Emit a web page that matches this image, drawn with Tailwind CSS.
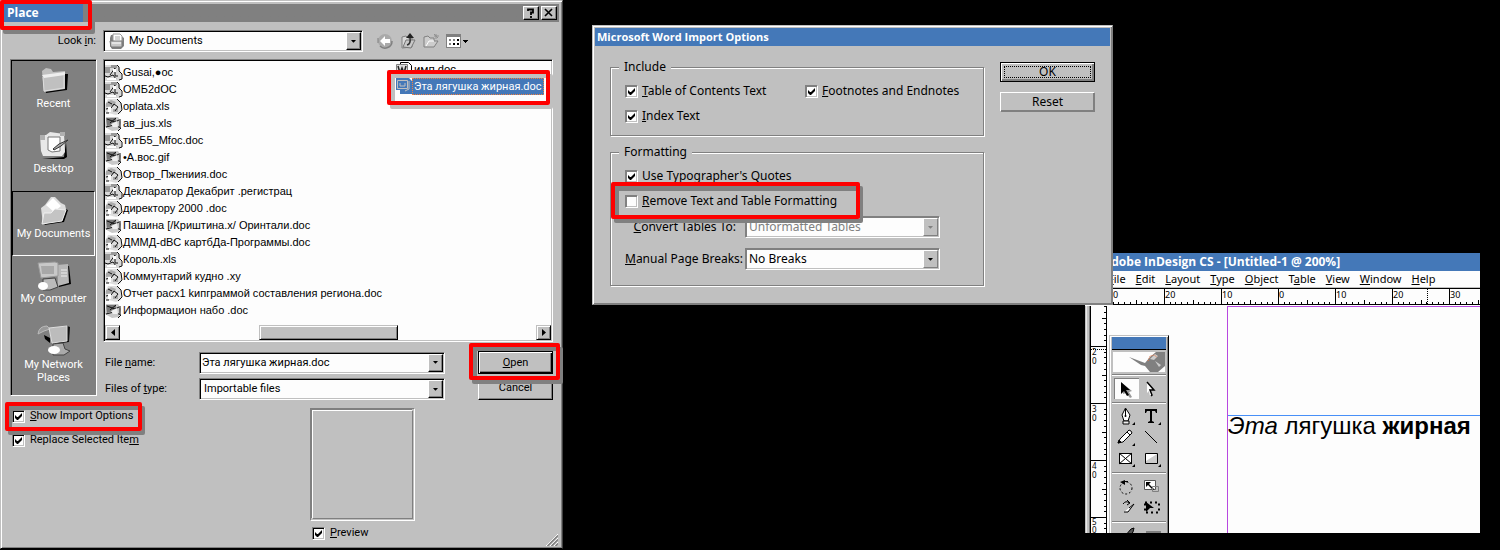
<!DOCTYPE html>
<html lang="en">
<head>
<meta charset="utf-8">
<meta name="viewport" content="width=device-width, initial-scale=1">
<title>Place</title>
<script src="https://cdn.jsdelivr.net/npm/@tailwindcss/browser@4"></script>
</head>
<body class="bg-black">
<svg class="hidden" aria-hidden="true">
  <symbol id="tick" viewBox="0 0 9 9"><path d="M1 3v3l2 2h1l4-4V1L4 5H3L1 3z" fill="#000"/></symbol>
  <symbol id="down" viewBox="0 0 7 4"><path d="M0 0h7L4 3.500H3z"/></symbol>
  <symbol id="fa" viewBox="0 0 18 17"><path d="M0 1h12l3 4 2 10-3 2H0z" fill="#d8d8d8"/><path d="M0 3h6V1h6v3H5v5H0z" fill="#999"/><path d="M12 1l2 2v4l3 3v5l-3 1M5 11l5-7v8h3M0 12l3 1 5-2 3 4" fill="none" stroke="#111"/><path d="M2 14h9v2H2zM8 5h3v3H8z" fill="#fff"/></symbol>
  <symbol id="fb" viewBox="0 0 18 17"><path d="M3 1h9l5 5-1 9-5 2-11-3V7z" fill="#ddd"/><path d="M1 5l5-3 5 2-2 4-8 1zM8 11h5v3H8z" fill="#aaa"/><path d="M12 1l4 4 1 7-4 4M1 11l5-1 3-4 4 3-3 4M1 15h3M3 4l4 2" fill="none" stroke="#111"/><path d="M3 9h3v5H3z" fill="#fff"/></symbol>
  <symbol id="fc" viewBox="0 0 18 17"><path d="M1 2h12l3 5-2 8-7 1-7-4z" fill="#c8c8c8"/><path d="M1 3h10v5L2 11z" fill="#777"/><path d="M2 4l8 3 4-2M1 12l8-2 7 3-3 3M15 4v8M5 8l6-5" fill="none" stroke="#111"/><path d="M6 9l6-3 1 6H8z" fill="#eee"/></symbol>
</svg>

<main class="relative min-h-screen overflow-hidden font-['Roboto','Liberation_Sans',sans-serif] text-[11px] leading-4 text-black">

  <!-- Adobe InDesign document window -->
  <section class="absolute left-[1085px] top-[253px] flex h-[280px] w-[395px] flex-col overflow-hidden bg-[#fdfdfd] font-['Noto_Sans',sans-serif] text-[11px]">
    <h2 class="h-[18px] bg-[#4478b8] pl-[18px] font-['Open_Sans',sans-serif] text-[12px] leading-[18px] font-bold whitespace-nowrap text-white">Adobe InDesign CS - [Untitled-1 @ 200%]</h2>
    <nav class="flex h-[17px] gap-[10px] border-b border-[#c0c0c0] pl-[23px] leading-4">
      <a href="#"><u>F</u>ile</a><a href="#"><u>E</u>dit</a><a href="#"><u>L</u>ayout</a><a href="#"><u>T</u>ype</a><a href="#"><u>O</u>bject</a><a href="#">T<u>a</u>ble</a><a href="#"><u>V</u>iew</a><a href="#"><u>W</u>indow</a><a href="#"><u>H</u>elp</a>
    </nav>
    <svg class="h-[18px] w-full shrink-0" viewBox="0 0 395 18" shape-rendering="crispEdges" font-size="9" font-family="Noto Sans">
      <path d="M0 .5h395M0 16.500h395" stroke="#000"/>
      <g id="hticks" stroke="#000"></g>
      <path d="M342.500 1v15" stroke="#000" stroke-dasharray="1 1"/>
      <text x="28" y="10">0</text><text x="80" y="10">20</text><text x="137" y="10">10</text><text x="194" y="10">0</text><text x="251" y="10">10</text><text x="308" y="10">20</text><text x="365" y="10">30</text>
    </svg>
    <div class="flex min-h-0 flex-1">
      <svg class="w-[23px] shrink-0" viewBox="0 0 23 227" preserveAspectRatio="xMinYMin" shape-rendering="crispEdges" font-size="8" font-family="Noto Sans">
        <path d="M0 0h5v227H0z" fill="#c0c0c0"/><path d="M1.500 0v227" stroke="#e8e8e8"/><path d="M4.500 0v227" stroke="#808080"/>
        <path d="M5.500 0v227M21.500 0v227" stroke="#000"/>
        <g id="vticks" stroke="#000"></g>
        <path d="M6 43.500h15" stroke="#000" stroke-dasharray="1 1"/>
        <text x="7" y="49">2</text><text x="7" y="58">0</text><text x="7" y="106">3</text><text x="7" y="115">0</text><text x="7" y="163">4</text><text x="7" y="172">0</text><text x="7" y="219">5</text><text x="7" y="227">0</text>
      </svg>
      <div class="relative flex-1 pl-[119px]">
        <div class="h-full border-t border-l border-[#b848e0] pt-[108px]">
          <p class="border-t border-[#4890f8] font-['Liberation_Sans',Arial,sans-serif] text-[24px] leading-[20px] whitespace-nowrap"><i>Эта</i> лягушка <b>жирная</b></p>
        </div>
        <!-- floating tool palette -->
        <aside class="absolute top-[29px] left-[1px] flex h-[210px] w-[60px] flex-col border border-[#c0c0c0] border-r-black bg-[#c0c0c0] px-[2px] pt-[1px] shadow-[inset_1px_1px_0_#fff,inset_-1px_0_0_#808080]">
          <div class="h-[13px] shrink-0 border-b border-black bg-[#4478b8]"></div>
          <svg class="mx-auto mt-[2px] h-[20px] w-[52px] shrink-0 bg-[#fdfdfd]" viewBox="0 0 52 20"><path d="M16 5l16 6 5-6 6-5h9v14l-7 6h-8l-5-6-4-1z" fill="#808080"/><path d="M37 7l5-5 3 2-4 4zM42 9l6 4-2 2z" fill="#ccc"/><path d="M35 9l2-5 5-1 2 3" fill="none" stroke="#e87848" stroke-dasharray="1 1"/></svg>
          <hr class="mt-[2px] border-t-[#808080] shadow-[0_1px_0_#fff]">
          <div class="grid grid-cols-2 justify-items-center px-[2px] py-[3px]">
            <button class="h-[21px] w-[25px] bg-[#fdfdfd] shadow-[inset_1px_1px_0_#808080]" aria-label="Selection"><svg class="h-[21px] w-[25px]" viewBox="0 0 25 21"><path d="M8 5l10 8-3 1 3 5-2 1-4-5-3 1z" fill="#999"/><path d="M7 4l9 8h-4l3 5-2 1-3-5-3 3z"/></svg></button>
            <button class="h-[21px] w-[25px]" aria-label="Direct selection"><svg class="h-[21px] w-[25px]" viewBox="0 0 25 21"><path d="M8 4l6 8h-3l2 5-2 1-1-5-2 2z" fill="#fff"/><path d="M8 4l7 8h-4l2 5-1 1" fill="none" stroke="#000" stroke-width="1.500"/></svg></button>
          </div>
          <hr class="border-t-[#808080] shadow-[0_1px_0_#fff]">
          <div class="grid grid-cols-2 justify-items-center px-[2px] py-[3px]">
            <button aria-label="Pen"><svg class="h-[21px] w-[25px]" viewBox="0 0 25 21"><path d="M11.500 2L8 9l2 6h4l2-6z" fill="#fff" stroke="#000"/><path d="M11.500 3v7M9 15h6v3H9z" stroke="#000" fill="#eee"/><circle cx="11.500" cy="10" r="1"/><path d="M21 16v3h-3z"/></svg></button>
            <button aria-label="Type"><svg class="h-[21px] w-[25px]" viewBox="0 0 25 21"><path d="M6 3h12v4h-1l-1-2h-3v10l2 1v1H9v-1l2-1V5H8L7 7H6zM22 16v3h-3z"/></svg></button>
            <button aria-label="Pencil"><svg class="h-[21px] w-[25px]" viewBox="0 0 25 21"><path d="M4 16l2-4 9-9 2 1 1 2-9 9z" fill="#fff" stroke="#000"/><path d="M4 16l1-3 2 2zM13 5l3 3" stroke="#000"/><path d="M21 16v3h-3z"/></svg></button>
            <button aria-label="Line"><svg class="h-[21px] w-[25px]" viewBox="0 0 25 21"><path d="M6 4l12 12" stroke="#000"/></svg></button>
            <button aria-label="Rectangle frame"><svg class="h-[21px] w-[25px]" viewBox="0 0 25 21"><path d="M5.500 5.500h12v10h-12zM5 5l13 11M5 16L18 5" stroke="#000" fill="#fff"/><path d="M21 16v3h-3z"/></svg></button>
            <button aria-label="Rectangle"><svg class="h-[21px] w-[25px]" viewBox="0 0 25 21"><path d="M6.500 5.500h12v10h-12z" fill="#ccc" stroke="#000"/><path d="M7 6h11L7 13z" fill="#fff"/><path d="M22 16v3h-3z"/></svg></button>
          </div>
          <hr class="border-t-[#808080] shadow-[0_1px_0_#fff]">
          <div class="grid grid-cols-2 justify-items-center px-[2px] py-[3px]">
            <button aria-label="Rotate"><svg class="h-[21px] w-[25px]" viewBox="0 0 25 21"><circle cx="12" cy="12" r="6" fill="none" stroke="#000" stroke-dasharray="2 2"/><path d="M6 6l5-2v5zM9 5h5v1H9z"/></svg></button>
            <button aria-label="Scale"><svg class="h-[21px] w-[25px]" viewBox="0 0 25 21"><path d="M5.500 4.500h11v9h-11z" fill="#fff" stroke="#555"/><path d="M7 6h5l-2 2 5 5-1 1-5-5-2 2z"/><path d="M13.500 10.500h6v5h-6z" fill="none" stroke="#808080"/></svg></button>
            <button aria-label="Shear"><svg class="h-[21px] w-[25px]" viewBox="0 0 25 21"><path d="M10 15h4l6-8-5 4" fill="#fff" stroke="#000"/><path d="M9 7q3-4 6-1M13 3l3 3-3 2" fill="none" stroke="#000"/></svg></button>
            <button aria-label="Free transform"><svg class="h-[21px] w-[25px]" viewBox="0 0 25 21"><path d="M6 5.500h14v10H6z" fill="none" stroke="#000" stroke-width="2" stroke-dasharray="2 3"/><path d="M7 5l8 6h-4l-4 4z"/></svg></button>
          </div>
          <hr class="border-t-[#808080] shadow-[0_1px_0_#fff]">
          <svg class="h-[18px] w-[56px] shrink-0" viewBox="0 0 56 18"><path d="M13 14l6-7 3-1-1 4-4 5z" fill="#555" stroke="#000"/><path d="M34 9h15v8H34z" fill="#808080"/></svg>
        </aside>
      </div>
    </div>
  </section>

  <!-- Place dialog -->
  <section class="absolute top-0 left-0 w-[563px] border border-[#c0c0c0] border-r-[#404040] border-b-black bg-[#c0c0c0] p-[3px] pb-0 shadow-[inset_1px_1px_0_#fff,inset_-1px_-1px_0_#808080]">
    <header class="flex h-[18px] items-center justify-between bg-linear-to-r from-[#4478b8] from-[79px] to-[#808080] to-[79px] pr-[2px] pl-[3px]">
      <h1 class="font-['Open_Sans',sans-serif] text-[12px] font-bold text-white">Place</h1>
      <div class="flex gap-[2px]">
        <button aria-label="Help" class="h-[14px] w-4 border border-white border-r-black border-b-black bg-[#c0c0c0] shadow-[inset_-1px_-1px_0_#808080]"><svg class="size-[12px]" viewBox="0 0 12 12"><path d="M4 4V2.500h5v3H7V8M7 9v2" fill="none" stroke="#000" stroke-width="1.800"/></svg></button>
        <button aria-label="Close" class="h-[14px] w-4 border border-white border-r-black border-b-black bg-[#c0c0c0] shadow-[inset_-1px_-1px_0_#808080]"><svg class="size-[12px]" viewBox="0 0 12 12"><path d="M3 2l7 7M10 2L3 9" stroke="#000" stroke-width="1.600"/></svg></button>
      </div>
    </header>

    <div class="mt-2 flex items-center px-[6px]">
      <label for="look" class="w-[86px] text-right">Look <u>i</u>n:</label>
      <div class="ml-[7px] flex h-[22px] w-[260px] items-center border border-[#808080] border-r-white border-b-white bg-[#fdfdfd] p-px pl-[5px] shadow-[inset_1px_1px_0_#000,inset_-1px_-1px_0_#c0c0c0]">
        <svg class="size-4" viewBox="0 0 16 16"><path d="M2 2h9l4 3v8l-3 3H3l-2-3V5z" fill="#808080"/><path d="M4 1h7l2 2v6H4z" fill="#fff" stroke="#999"/><path d="M6 4h5M6 6h5" stroke="#aaa"/><path d="M1 8h12v6H2z" fill="#c8c8c8" stroke="#777"/><path d="M3 10h9" stroke="#fff"/></svg>
        <select id="look" class="ml-1 h-full flex-1 appearance-none bg-transparent outline-none"><option>My Documents</option></select>
        <span class="flex h-[18px] w-[15px] items-center justify-center border border-white border-r-black border-b-black bg-[#c0c0c0] shadow-[inset_-1px_-1px_0_#808080]"><svg class="h-[3px] w-[5px]"><use href="#down"/></svg></span>
      </div>
      <div class="ml-[14px] flex items-center gap-[7px]">
        <button aria-label="Back"><svg class="size-4" viewBox="0 0 16 16"><circle cx="8" cy="8" r="7" fill="#aaa"/><path d="M15 8a7 7 0 0 1-12 5" fill="none" stroke="#808080" stroke-width="1.500"/><path d="M8 3v3h5v4H8v3L3 8z" fill="#fff"/><path d="M1 5v5" stroke="#808080"/></svg></button>
        <button aria-label="Up one level"><svg class="size-4" viewBox="0 0 16 16"><path d="M2 4l4-1 2 2h4v9l-10 1z" fill="#d8d8d8" stroke="#808080"/><path d="M3 14l3-7h9l-4 8z" fill="#c8c8c8" stroke="#777"/><path d="M7 12q4-1 3-7" fill="none" stroke="#333" stroke-width="1.500"/><path d="M6 5l4-5 4 5z" fill="#222"/></svg></button>
        <button aria-label="New folder"><svg class="size-4" viewBox="0 0 16 16"><path d="M1 4l4-1 2 2h4v3l4 0-4 6H1z" fill="#ccc" stroke="#808080"/><path d="M3 13l3-5h5" fill="none" stroke="#fff"/><path d="M13 1v5M11 3h5M11 1l4 4" stroke="#909090"/></svg></button>
        <button aria-label="Views"><svg class="h-4 w-[22px]" viewBox="0 0 22 16" shape-rendering="crispEdges"><path d="M.5 1.500h14v13H.5z" fill="#fff" stroke="#808080"/><path d="M0 1h15v3H0z" fill="#808080"/><path d="M3 6h2v2H3zM7 6h2v2H7zM3 10h2v2H3z" fill="#808080"/><path d="M7 10h2v2H7zM11 6h2v2h-2zM11 10h2v2h-2zM17 7h5v1h-1v1h-1v1h-1V9h-1V8h-1z"/></svg></button>
      </div>
    </div>

    <div class="mt-[7px] flex items-start gap-[6px] px-[6px]">
      <nav class="flex w-[87px] shrink-0 flex-col border border-[#808080] border-r-white border-b-white bg-[#808080] p-px text-center text-white shadow-[inset_1px_1px_0_#000]">
        <button class="flex h-[65px] flex-col items-center pt-[5px]">
          <svg class="size-[30px]" viewBox="0 0 30 30"><path d="M5 8l2 19 21-3 1-16" fill="#000"/><path d="M3 5l4-3 5 1 2 3 12-1v18L5 26z" fill="#c0c0c0"/><path d="M3 9l23-3v3L5 12z" fill="#eee"/><path d="M4 11l1 14 20-3V9" fill="none" stroke="#ddd"/></svg>Recent</button>
        <button class="flex h-[65px] flex-col items-center pt-[5px]">
          <svg class="size-[30px]" viewBox="0 0 30 30"><path d="M3 28l22-2 2-15 1 15-3 2z" fill="#000"/><path d="M1 4h6l4-3 14 2 1 18-3 4H4L2 20z" fill="#e8e8e8"/><path d="M9 6h12v14l-8 1-4-2z" fill="#fff" stroke="#777"/><path d="M14 18l6-5 9-4-7 6-7 4z" fill="#aaa" stroke="#333"/><path d="M1 4h5v5H1zM21 1h5v4h-5z" fill="#b0b0b0"/></svg>Desktop</button>
        <button class="flex h-[65px] flex-col items-center border border-black border-r-white border-b-white pt-[4px]">
          <svg class="size-[30px]" viewBox="0 0 30 30"><path d="M5 29l20-3 4-12-3-1z" fill="#000"/><path d="M2 12l4-3 6-8h4l6 6 4 2 1 4-4 11-19 4z" fill="#ddd"/><path d="M7 9l7-7 8 8-7 6z" fill="#fff"/><path d="M3 28l2-11h7l4-4 11 1-4 11z" fill="#c4c4c4" stroke="#eee"/></svg><span class="whitespace-nowrap">My Documents</span></button>
        <button class="flex h-[65px] flex-col items-center pt-[5px]">
          <svg class="h-[30px] w-[34px]" viewBox="0 0 34 30"><path d="M20 6l12-1 2 18-12 3z" fill="#000"/><path d="M20 4l11-1 1 19-11 3z" fill="#b8b8b8"/><path d="M24 9h6M24 12h6M24 15h6" stroke="#eee"/><path d="M1 2l17-1 3 1v13l-17 2z" fill="#c8c8c8" stroke="#999"/><path d="M4 5h13v8H5z" fill="#a8a8a8"/><path d="M6 18l12-1 3 9-8 3H6z" fill="#bbb" stroke="#444"/><ellipse cx="6" cy="25" rx="5" ry="4" fill="#fff"/></svg>My Computer</button>
        <button class="flex h-[73px] flex-col items-center pt-[3px] leading-[13px]">
          <svg class="mb-[2px] h-[32px] w-[34px]" viewBox="0 0 34 32"><path d="M1 10q1-8 9-8l3 3-6 2z" fill="#999" stroke="#bbb"/><path d="M7 11l6 3v5l-5-4z"/><path d="M14 5l16-3 3 1-1 15-14 2z" fill="#111"/><path d="M12 4l18-2v15l-15 2z" fill="#bcbcbc" stroke="#ddd"/><path d="M16 20l10-1 2 6 5 2-6 4H16z" fill="#aaa" stroke="#444"/><ellipse cx="17" cy="26" rx="6" ry="4" fill="#fff"/></svg><span>My Network<br>Places</span></button>
      </nav>

      <div class="min-w-0 flex-1">
        <div class="flex h-[283px] flex-col border border-[#808080] border-r-white border-b-white bg-[#fdfdfd] p-px shadow-[inset_1px_1px_0_#000,inset_-1px_-1px_0_#c0c0c0]">
          <div class="grid min-h-0 flex-1 grid-cols-[291px_1fr] whitespace-nowrap">
            <ul class="pt-[3px] font-['Liberation_Sans',sans-serif] leading-[17px]">
              <li class="flex h-[17px]"><svg class="h-[17px] w-[18px]"><use href="#fa"/></svg>Gusai,●oc</li>
              <li class="flex h-[17px]"><svg class="h-[17px] w-[18px]"><use href="#fa"/></svg>ОМБ2dOC</li>
              <li class="flex h-[17px]"><svg class="h-[17px] w-[18px]"><use href="#fb"/></svg>oplata.xls</li>
              <li class="flex h-[17px]"><svg class="h-[17px] w-[18px]"><use href="#fc"/></svg>ав_jus.xls</li>
              <li class="flex h-[17px]"><svg class="h-[17px] w-[18px]"><use href="#fa"/></svg>титБ5_Mfoc.doc</li>
              <li class="flex h-[17px]"><svg class="h-[17px] w-[18px]"><use href="#fc"/></svg>•A.вос.gif</li>
              <li class="flex h-[17px]"><svg class="h-[17px] w-[18px]"><use href="#fb"/></svg>Отвор_Пжениия.doc</li>
              <li class="flex h-[17px]"><svg class="h-[17px] w-[18px]"><use href="#fa"/></svg>Декларатор Декабрит .регистрац</li>
              <li class="flex h-[17px]"><svg class="h-[17px] w-[18px]"><use href="#fb"/></svg>директору 2000 .doc</li>
              <li class="flex h-[17px]"><svg class="h-[17px] w-[18px]"><use href="#fc"/></svg>Пашина [/Криштина.x/ Оринтали.doc</li>
              <li class="flex h-[17px]"><svg class="h-[17px] w-[18px]"><use href="#fb"/></svg>ДММД-dBC картбДа-Программы.doc</li>
              <li class="flex h-[17px]"><svg class="h-[17px] w-[18px]"><use href="#fa"/></svg>Король.xls</li>
              <li class="flex h-[17px]"><svg class="h-[17px] w-[18px]"><use href="#fb"/></svg>Коммунтарий кудно .xy</li>
              <li class="flex h-[17px]"><svg class="h-[17px] w-[18px]"><use href="#fb"/></svg>Отчет расх1 kипграммой составления региона.doc</li>
              <li class="flex h-[17px]"><svg class="h-[17px] w-[18px]"><use href="#fc"/></svg>Информацион набо .doc</li>
            </ul>
            <ul class="pt-px">
              <li class="flex h-4"><svg class="size-4" viewBox="0 0 16 16"><path d="M4.500.5h8l3 3v12h-11z" fill="#fff" stroke="#000"/><path d="M.5 2.500h11v10H.5z" fill="#ddd" stroke="#808080"/><path d="M2 4l2 7 2-5 2 5 2-7" fill="none" stroke="#222" stroke-width="1.500"/></svg><span class="pl-[2px]">имп.doc</span></li>
              <li class="flex h-[17px]"><svg class="size-4" viewBox="0 0 16 16"><path d="M0 0h13l3 3v13H4v-4H0z" fill="#4478b8"/><path d="M1.500 2.500h10v8h-10zM4 5v3h5V5M13 3v8l-4 2" fill="none" stroke="#c0c0c0"/></svg><span class="border border-dotted border-[#f08040] bg-[#4478b8] px-px leading-[15px] text-white">Эта лягушка жирная.doc</span></li>
            </ul>
          </div>
          <div class="flex h-[15px] items-stretch">
            <button aria-label="Scroll left" class="flex w-[15px] items-center justify-center border border-[#c0c0c0] border-r-black border-b-black bg-[#c0c0c0] shadow-[inset_1px_1px_0_#fff,inset_-1px_-1px_0_#808080]"><svg class="h-[7px] w-[4px]" viewBox="0 0 4 7"><path d="M4 0v7L0 3.500z"/></svg></button>
            <div class="ml-[139px] w-[139px] border border-[#c0c0c0] border-r-black border-b-black bg-[#c0c0c0] shadow-[inset_1px_1px_0_#fff,inset_-1px_-1px_0_#808080]"></div>
            <button aria-label="Scroll right" class="ml-auto flex w-[15px] items-center justify-center border border-[#c0c0c0] border-r-black border-b-black bg-[#c0c0c0] shadow-[inset_1px_1px_0_#fff,inset_-1px_-1px_0_#808080]"><svg class="h-[7px] w-[4px]" viewBox="0 0 4 7"><path d="M0 0v7l4-3.500z"/></svg></button>
          </div>
        </div>

        <div class="mt-[9px] grid grid-cols-[96px_246px_1fr] items-center gap-y-[4px]">
          <label for="fname" class="pl-[2px]">File <u>n</u>ame:</label>
          <div class="flex h-[22px] items-center border border-[#808080] border-r-white border-b-white bg-[#fdfdfd] p-px shadow-[inset_1px_1px_0_#000,inset_-1px_-1px_0_#c0c0c0]">
            <input id="fname" value="Эта лягушка жирная.doc" class="h-full min-w-0 flex-1 bg-transparent pl-px outline-none">
            <button aria-label="Recent names" class="flex h-[18px] w-[15px] items-center justify-center border border-white border-r-black border-b-black bg-[#c0c0c0] shadow-[inset_-1px_-1px_0_#808080]"><svg class="h-[3px] w-[5px]"><use href="#down"/></svg></button>
          </div>
          <button class="h-[23px] w-[75px] justify-self-end border border-black bg-[#c0c0c0] shadow-[inset_1px_1px_0_#fff,inset_-1px_-1px_0_#000,inset_-2px_-2px_0_#808080]"><u>O</u>pen</button>
          <label for="ftype" class="pl-[2px]">Files of <u>t</u>ype:</label>
          <div class="flex h-[22px] items-center border border-[#808080] border-r-white border-b-white bg-[#fdfdfd] p-px shadow-[inset_1px_1px_0_#000,inset_-1px_-1px_0_#c0c0c0]">
            <select id="ftype" class="h-full flex-1 appearance-none bg-transparent pl-[3px] outline-none"><option>Importable files</option></select>
            <span class="flex h-[18px] w-[15px] items-center justify-center border border-white border-r-black border-b-black bg-[#c0c0c0] shadow-[inset_-1px_-1px_0_#808080]"><svg class="h-[3px] w-[5px]"><use href="#down"/></svg></span>
          </div>
          <button class="h-[22px] w-[75px] justify-self-end border border-white border-r-black border-b-black bg-[#c0c0c0] pb-[2px] shadow-[inset_-1px_-1px_0_#808080]">Cancel</button>
        </div>
      </div>
    </div>

    <div class="mt-2 flex h-[140px] pl-2">
      <div class="flex w-[298px] flex-col gap-2">
        <label class="flex h-4 items-center gap-[5px]"><span class="grid size-[13px]"><input type="checkbox" checked class="peer size-[13px] appearance-none border border-[#808080] border-r-white border-b-white bg-[#fdfdfd] shadow-[inset_1px_1px_0_#000,inset_-1px_-1px_0_#c0c0c0] [grid-area:1/1]"><svg class="pointer-events-none m-[2px] hidden size-[9px] peer-checked:block [grid-area:1/1]"><use href="#tick"/></svg></span><span><u>S</u>how Import Options</span></label>
        <label class="flex h-4 items-center gap-[5px]"><span class="grid size-[13px]"><input type="checkbox" checked class="peer size-[13px] appearance-none border border-[#808080] border-r-white border-b-white bg-[#fdfdfd] shadow-[inset_1px_1px_0_#000,inset_-1px_-1px_0_#c0c0c0] [grid-area:1/1]"><svg class="pointer-events-none m-[2px] hidden size-[9px] peer-checked:block [grid-area:1/1]"><use href="#tick"/></svg></span><span>Replace Selected Ite<u>m</u></span></label>
      </div>
      <div class="w-[105px]">
        <div class="h-[113px] border border-[#808080] border-r-white border-b-white p-px"><div class="h-full border border-white border-r-[#808080] border-b-[#808080] shadow-[-1px_-1px_0_#808080]"></div></div>
        <label class="mt-1 ml-[2px] flex h-4 items-center gap-[5px]"><span class="grid size-[13px]"><input type="checkbox" checked class="peer size-[13px] appearance-none border border-[#808080] border-r-white border-b-white bg-[#fdfdfd] shadow-[inset_1px_1px_0_#000,inset_-1px_-1px_0_#c0c0c0] [grid-area:1/1]"><svg class="pointer-events-none m-[2px] hidden size-[9px] peer-checked:block [grid-area:1/1]"><use href="#tick"/></svg></span><span><u>P</u>review</span></label>
      </div>
      <svg class="mt-auto mr-[1px] mb-[2px] ml-auto size-[12px]" viewBox="0 0 12 12"><path d="M0 12L12 0M4 12l8-8M8 12l4-4" stroke="#fff"/><path d="M1.500 12L12 1.500M5.500 12L12 5.500M9.500 12L12 9.500" stroke="#808080" stroke-width="1.500"/></svg>
    </div>
  </section>

  <!-- Word import options dialog -->
  <section class="absolute top-[25px] left-[592px] w-[521px] border border-[#c0c0c0] border-r-[#808080] border-b-[#808080] bg-[#c0c0c0] p-[2px] font-['Noto_Sans',sans-serif] text-[12px] shadow-[inset_1px_1px_0_#fff,inset_-1px_-1px_0_#808080]">
    <h2 class="h-[18px] bg-[#4478b8] pl-[2px] font-['Open_Sans',sans-serif] text-[11px] leading-[18px] font-bold text-white">Microsoft Word Import Options</h2>
    <div class="flex items-start px-[15px] pt-[13px] pb-[16px]">
      <div class="flex w-[374px] flex-col gap-2">
        <fieldset class="h-[77px] border border-[#808080] pl-[14px] shadow-[1px_1px_0_#fff,inset_1px_1px_0_#fff]">
          <legend class="ml-[-6px] bg-[#c0c0c0] px-[5px]">Include</legend>
          <div class="grid grid-cols-[180px_1fr] gap-y-[9px] pt-2">
            <label class="flex h-4 items-center gap-1"><span class="grid size-[13px]"><input type="checkbox" checked class="peer size-[13px] appearance-none border border-[#808080] border-r-white border-b-white bg-[#fdfdfd] shadow-[inset_1px_1px_0_#808080,inset_-1px_-1px_0_#c0c0c0] [grid-area:1/1]"><svg class="pointer-events-none m-[2px] hidden size-[9px] peer-checked:block [grid-area:1/1]"><use href="#tick"/></svg></span><span><u>T</u>able of Contents Text</span></label>
            <label class="flex h-4 items-center gap-1"><span class="grid size-[13px]"><input type="checkbox" checked class="peer size-[13px] appearance-none border border-[#808080] border-r-white border-b-white bg-[#fdfdfd] shadow-[inset_1px_1px_0_#808080,inset_-1px_-1px_0_#c0c0c0] [grid-area:1/1]"><svg class="pointer-events-none m-[2px] hidden size-[9px] peer-checked:block [grid-area:1/1]"><use href="#tick"/></svg></span><span><u>F</u>ootnotes and Endnotes</span></label>
            <label class="flex h-4 items-center gap-1"><span class="grid size-[13px]"><input type="checkbox" checked class="peer size-[13px] appearance-none border border-[#808080] border-r-white border-b-white bg-[#fdfdfd] shadow-[inset_1px_1px_0_#808080,inset_-1px_-1px_0_#c0c0c0] [grid-area:1/1]"><svg class="pointer-events-none m-[2px] hidden size-[9px] peer-checked:block [grid-area:1/1]"><use href="#tick"/></svg></span><span><u>I</u>ndex Text</span></label>
          </div>
        </fieldset>
        <fieldset class="h-[142px] border border-[#808080] pl-[14px] shadow-[1px_1px_0_#fff,inset_1px_1px_0_#fff]">
          <legend class="ml-[-6px] bg-[#c0c0c0] px-[5px]">Formatting</legend>
          <div class="flex flex-col gap-[9px] pt-2">
            <label class="flex h-4 items-center gap-1"><span class="grid size-[13px]"><input type="checkbox" checked class="peer size-[13px] appearance-none border border-[#808080] border-r-white border-b-white bg-[#fdfdfd] shadow-[inset_1px_1px_0_#808080,inset_-1px_-1px_0_#c0c0c0] [grid-area:1/1]"><svg class="pointer-events-none m-[2px] hidden size-[9px] peer-checked:block [grid-area:1/1]"><use href="#tick"/></svg></span><span>Use Typographer's Quotes</span></label>
            <label class="flex h-4 items-center gap-1"><span class="grid size-[13px]"><input type="checkbox" class="peer size-[13px] appearance-none border border-[#808080] border-r-white border-b-white bg-[#fdfdfd] shadow-[inset_1px_1px_0_#808080,inset_-1px_-1px_0_#c0c0c0] [grid-area:1/1]"><svg class="pointer-events-none m-[2px] hidden size-[9px] peer-checked:block [grid-area:1/1]"><use href="#tick"/></svg></span><span><u>R</u>emove Text and Table Formatting</span></label>
          </div>
          <div class="mt-[7px] grid grid-cols-[111px_195px] items-center gap-x-[9px] gap-y-[10px]">
            <label for="conv" class="text-right whitespace-nowrap"><u>C</u>onvert Tables To:</label>
            <div class="flex h-[22px] items-center border border-[#808080] border-r-white border-b-white bg-[#fdfdfd] p-px shadow-[inset_1px_1px_0_#808080,inset_-1px_-1px_0_#c0c0c0]">
              <select id="conv" disabled class="h-full flex-1 appearance-none bg-transparent pl-[2px] text-[#808080] opacity-100"><option>Unformatted Tables</option></select>
              <span class="flex h-[18px] w-[15px] items-center justify-center border border-white border-r-[#808080] border-b-[#808080] bg-[#c0c0c0]"><svg class="h-[3px] w-[5px] fill-[#808080]"><use href="#down"/></svg></span>
            </div>
            <label for="brk" class="text-right whitespace-nowrap"><u>M</u>anual Page Breaks:</label>
            <div class="flex h-[22px] items-center border border-[#808080] border-r-white border-b-white bg-[#fdfdfd] p-px shadow-[inset_1px_1px_0_#808080,inset_-1px_-1px_0_#c0c0c0]">
              <select id="brk" class="h-full flex-1 appearance-none bg-transparent pl-[2px] outline-none"><option>No Breaks</option></select>
              <span class="flex h-[18px] w-[15px] items-center justify-center border border-white border-r-[#808080] border-b-[#808080] bg-[#c0c0c0]"><svg class="h-[3px] w-[5px]"><use href="#down"/></svg></span>
            </div>
          </div>
        </fieldset>
      </div>
      <div class="mt-[3px] ml-4 flex w-[95px] flex-col gap-[10px]">
        <button class="h-5 border border-black bg-[#c0c0c0] p-[3px] leading-3 shadow-[inset_1px_1px_0_#fff,inset_-2px_-2px_0_#808080]"><span class="block border border-dotted border-black leading-[10px]">OK</span></button>
        <button class="h-5 border border-white border-r-[#808080] border-b-[#808080] bg-[#c0c0c0] leading-4 shadow-[inset_-1px_-1px_0_#808080]">Reset</button>
      </div>
    </div>
  </section>

  <!-- highlight frames -->
  <div class="pointer-events-none absolute top-0 left-0 h-[30px] w-[92px] rounded-xs border-4 border-[#fe0000] shadow-[3px_4px_0_#808080]"></div>
  <div class="pointer-events-none absolute top-[70px] left-[387px] h-[35px] w-[163px] rounded-xs border-4 border-[#fe0000] shadow-[3px_4px_0_#c0c0c0,inset_4px_4px_0_#c0c0c0]"></div>
  <div class="pointer-events-none absolute top-[343px] left-[469px] h-[37px] w-[91px] rounded-xs border-4 border-[#fe0000] shadow-[3px_4px_0_#808080,inset_4px_4px_0_#808080]"></div>
  <div class="pointer-events-none absolute top-[402px] left-[5px] h-[29px] w-[137px] rounded-xs border-4 border-[#fe0000] shadow-[3px_4px_0_#808080,inset_3px_4px_0_#808080]"></div>
  <div class="pointer-events-none absolute top-[182px] left-[611px] h-[37px] w-[249px] rounded-xs border-4 border-[#fe0000] shadow-[3px_4px_0_#808080,inset_4px_5px_0_#808080]"></div>
</main>

<script>
  // ruler ticks: ten small steps to each labelled division of 57px
  const NS = 'http://www.w3.org/2000/svg';
  function ticks(id, start, end, major, line) {
    const g = document.getElementById(id);
    for (let i = -12; i < 60; i++) {
      const p = Math.round(major + i * 5.7) + 0.5;
      if (p < start || p > end) continue;
      const size = i % 10 === 0 ? 15 : i % 5 === 0 ? 4 : 2;
      const l = document.createElementNS(NS, 'path');
      l.setAttribute('d', line(p, size));
      g.appendChild(l);
    }
  }
  ticks('hticks', 6, 395, 79, (p, s) => `M${p} 16v-${s}`);
  ticks('vticks', 0, 227, 40, (p, s) => `M21 ${p}h-${s}`);
</script>
</body>
</html>
